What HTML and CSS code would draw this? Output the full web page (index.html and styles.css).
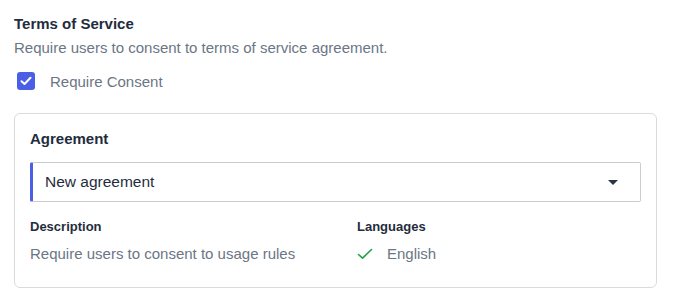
FILE: index.html
```html
<!DOCTYPE html>
<html lang="en">
<head>
    <meta charset="UTF-8">
    <meta name="viewport" content="width=device-width, initial-scale=1.0">
    <title>Terms of Service</title>
    <link rel="stylesheet" href="styles.css">
</head>
<body>
    <!-- Terms of service section -->
    <section class="tos">
        <h3 class="tos-title">Terms of Service</h3>
        <p class="tos-desc">Require users to consent to terms of service agreement.</p>
        <label class="check-row">
            <span class="checkbox">
                <svg width="12" height="10" viewBox="0 0 12 10"><path d="M1.5 5.2 L4.5 8 L10.5 1.8" fill="none" stroke="#fff" stroke-width="2" stroke-linecap="round" stroke-linejoin="round"/></svg>
            </span>
            <span class="check-label">Require Consent</span>
        </label>

        <!-- Agreement card -->
        <div class="card">
            <h4 class="card-title">Agreement</h4>
            <div class="select">
                <span class="select-value">New agreement</span>
                <span class="caret"></span>
            </div>
            <div class="details">
                <div class="detail">
                    <h5 class="detail-label">Description</h5>
                    <p class="detail-value">Require users to consent to usage rules</p>
                </div>
                <div class="detail">
                    <h5 class="detail-label">Languages</h5>
                    <p class="detail-value lang">
                        <svg width="16" height="12" viewBox="0 0 16 12"><path d="M1.5 6.5 L5.5 10.2 L14.5 1.5" fill="none" stroke="#22a245" stroke-width="1.6" stroke-linecap="round" stroke-linejoin="round"/></svg>
                        English
                    </p>
                </div>
            </div>
        </div>
    </section>
</body>
</html>
```

FILE: styles.css
```css
/* base */
:root {
    --dark: #1f2d3d;
    --muted: #6b7685;
    --blue: #4a5fe6;
    --border: #d8dbe0;
}

* {
    margin: 0;
    padding: 0;
    box-sizing: border-box;
}

body {
    font-family: "Liberation Sans", Arial, sans-serif;
    color: var(--dark);
    background: #fff;
}

/* section */
.tos {
    padding: 14px 17px 0 14px;
}

.tos-title {
    font-size: 15px;
    line-height: 20px;
    font-weight: bold;
}

.tos-desc {
    margin-top: 4px;
    font-size: 15px;
    line-height: 20px;
    color: var(--muted);
}

.check-row {
    display: flex;
    align-items: center;
    margin-top: 13px;
    padding-left: 3px;
    height: 20px;
}

.checkbox {
    width: 18px;
    height: 18px;
    border-radius: 3px;
    background: var(--blue);
    display: flex;
    align-items: center;
    justify-content: center;
}

.check-label {
    margin-left: 15px;
    font-size: 15px;
    color: var(--muted);
}

/* card */
.card {
    margin-top: 22px;
    border: 1px solid var(--border);
    border-radius: 6px;
    padding: 15px 15px 18px 15px;
    height: 175px;
}

.card-title {
    font-size: 15px;
    line-height: 20px;
    font-weight: bold;
}

.select {
    margin-top: 13px;
    height: 40px;
    border: 1px solid #c9ccd3;
    border-left: 3px solid var(--blue);
    border-radius: 2px;
    display: flex;
    align-items: center;
    justify-content: space-between;
    padding: 0 22px 0 12px;
}

.select-value {
    font-size: 15.5px;
    color: var(--dark);
}

.caret {
    width: 0;
    height: 0;
    border-left: 5px solid transparent;
    border-right: 5px solid transparent;
    border-top: 5px solid #2a3544;
}

.details {
    display: grid;
    grid-template-columns: 327px 1fr;
    margin-top: 16px;
}

.detail-label {
    font-size: 13px;
    line-height: 18px;
    font-weight: bold;
}

.detail-value {
    margin-top: 8px;
    font-size: 15px;
    line-height: 20px;
    color: var(--muted);
}

.lang {
    display: flex;
    align-items: center;
    gap: 14px;
}
```
